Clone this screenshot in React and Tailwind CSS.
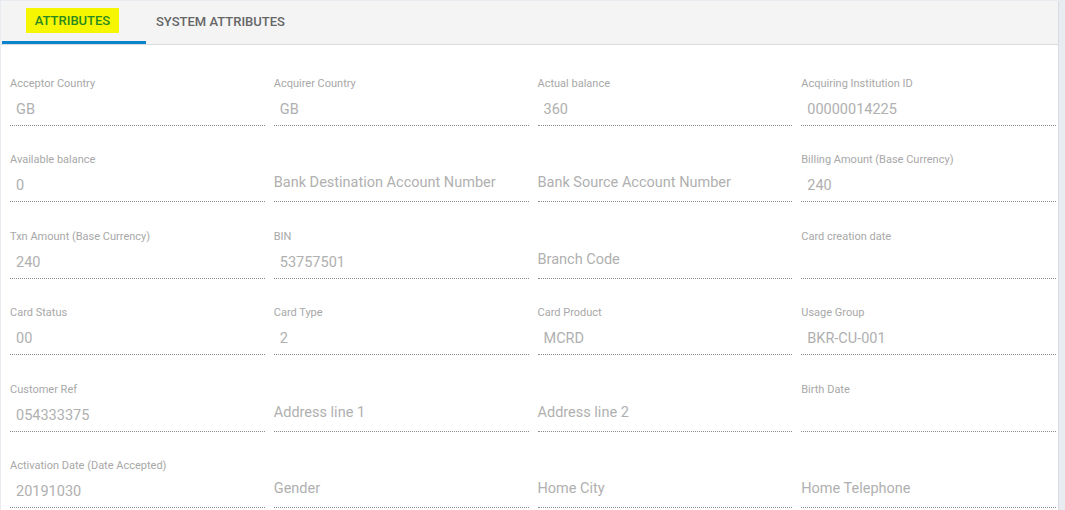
import React from "react";

const rows = [
  [
    { label: "Acceptor Country", value: "GB" },
    { label: "Acquirer Country", value: "GB" },
    { label: "Actual balance", value: "360" },
    { label: "Acquiring Institution ID", value: "00000014225" },
  ],
  [
    { label: "Available balance", value: "0" },
    { placeholder: "Bank Destination Account Number" },
    { placeholder: "Bank Source Account Number" },
    { label: "Billing Amount (Base Currency)", value: "240" },
  ],
  [
    { label: "Txn Amount (Base Currency)", value: "240" },
    { label: "BIN", value: "53757501" },
    { placeholder: "Branch Code" },
    { label: "Card creation date", value: "" },
  ],
  [
    { label: "Card Status", value: "00" },
    { label: "Card Type", value: "2" },
    { label: "Card Product", value: "MCRD" },
    { label: "Usage Group", value: "BKR-CU-001" },
  ],
  [
    { label: "Customer Ref", value: "054333375" },
    { placeholder: "Address line 1" },
    { placeholder: "Address line 2" },
    { label: "Birth Date", value: "" },
  ],
  [
    { label: "Activation Date (Date Accepted)", value: "20191030" },
    { placeholder: "Gender" },
    { placeholder: "Home City" },
    { placeholder: "Home Telephone" },
  ],
];

// one attribute cell, dotted underline like a material input
const Field = ({ label, value, placeholder }) => (
  <div className="h-[76.5px] flex flex-col justify-end border-b border-dotted border-[#8a8a8a]">
    {placeholder ? (
      <div className="text-[14.5px] leading-[20px] pb-[8px] text-[#b0b0b0]">{placeholder}</div>
    ) : (
      <>
        <div className="text-[11px] leading-[14px] mb-[9px] text-[#a8a8a8]">{label}</div>
        <div className="text-[14.5px] leading-[20px] pl-[6px] pb-[5px] text-[#b0b0b0] min-h-[25px]">
          {value}
        </div>
      </>
    )}
  </div>
);

const App = () => {
  return (
    <div
      className="w-[1065px] h-[510px] overflow-hidden bg-[#e8ebef] pt-[1px] pl-[1px] pr-[6px]"
      style={{ fontFamily: "Roboto, 'Liberation Sans', sans-serif" }}
    >
      <div className="h-full bg-white border-r border-[#d8dbe0]">
        {/* tabs */}
        <div className="h-[44px] bg-[#f4f4f4] border-b border-[#dcdcdc] flex items-end">
          <div className="w-[144px] h-full flex flex-col border-b-[3px] border-[#0a84cc] ml-[1px]">
            <div className="flex-1 flex items-center justify-center">
              <span className="bg-[#f6f600] px-[9px] h-[25px] flex items-center text-[13px] font-medium text-[#2a8a1e] -mt-[1px] -ml-[3px]">
                ATTRIBUTES
              </span>
            </div>
          </div>
          <div className="h-full flex items-center pl-[10px] pb-[2px] text-[13px] font-medium text-[#666666]">
            SYSTEM ATTRIBUTES
          </div>
        </div>

        {/* attribute grid */}
        <div className="grid grid-cols-4 gap-x-[9px] pl-[9px] pr-[2px] pt-[4px]">
          {rows.flat().map((f, i) => (
            <Field key={i} {...f} />
          ))}
        </div>
      </div>
    </div>
  );
};

export default App;
